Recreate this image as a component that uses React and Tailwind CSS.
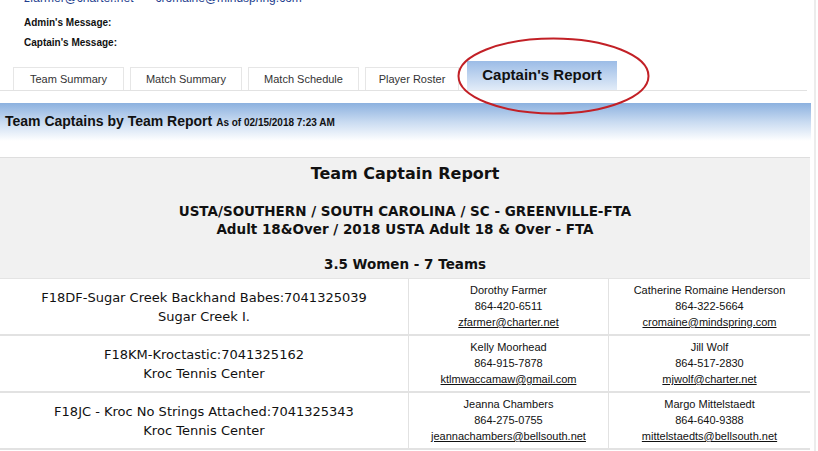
import React from "react";

const tabs = [
  { label: "Team Summary", width: "w-[111px]" },
  { label: "Match Summary", width: "w-[112px]" },
  { label: "Match Schedule", width: "w-[111px]" },
  { label: "Player Roster", width: "w-[94px]" },
];

const teams = [
  {
    name: "F18DF-Sugar Creek Backhand Babes:7041325039",
    site: "Sugar Creek I.",
    captains: [
      { name: "Dorothy Farmer", phone: "864-420-6511", email: "zfarmer@charter.net" },
      { name: "Catherine Romaine Henderson", phone: "864-322-5664", email: "cromaine@mindspring.com" },
    ],
  },
  {
    name: "F18KM-Kroctastic:7041325162",
    site: "Kroc Tennis Center",
    captains: [
      { name: "Kelly Moorhead", phone: "864-915-7878", email: "ktlmwaccamaw@gmail.com" },
      { name: "Jill Wolf", phone: "864-517-2830", email: "mjwolf@charter.net" },
    ],
  },
  {
    name: "F18JC - Kroc No Strings Attached:7041325343",
    site: "Kroc Tennis Center",
    captains: [
      { name: "Jeanna Chambers", phone: "864-275-0755", email: "jeannachambers@bellsouth.net" },
      { name: "Margo Mittelstaedt", phone: "864-640-9388", email: "mittelstaedts@bellsouth.net" },
    ],
  },
];

const Captain = ({ captain }) => (
  <div className="flex-1 flex flex-col items-center pt-[3px] text-[11px] leading-[16px] text-[#111]">
    <span>{captain.name}</span>
    <span>{captain.phone}</span>
    <a className="underline">{captain.email}</a>
  </div>
);

export default function App() {
  return (
    <div className="relative w-[818px] h-[451px] overflow-hidden bg-white font-['Liberation_Sans',Arial,sans-serif] text-black">
      <div className="flex">
        <div className="w-[811px]">
          {/* Contact line cut off at the top */}
          <div className="flex gap-[22px] pl-[24px] -mt-[9px] h-[14px] text-[12px] leading-[14px] text-[#1f3f8f]">
            <span>zfarmer@charter.net</span>
            <span>cromaine@mindspring.com</span>
          </div>

          {/* Messages */}
          <div className="pl-[24px] pt-[8px] text-[10px] font-bold leading-[20px] text-[#111]">
            <div>Admin's Message:</div>
            <div>Captain's Message:</div>
          </div>

          {/* Tabs */}
          <div className="mt-[8px] w-[807px] h-[30px] flex items-end gap-[6px] pl-[13px] border-b border-[#e2e2e2]">
            {tabs.map((tab) => (
              <div
                key={tab.label}
                className={`${tab.width} h-[23px] flex items-center justify-center border-t border-l border-r border-[#e6e6e6] text-[11px] text-[#333]`}
              >
                {tab.label}
              </div>
            ))}
            <div className="ml-[2px] w-[150px] h-[29px] flex items-center justify-center bg-gradient-to-b from-[#9cbce6] to-[#e2ecf8] text-[15px] font-bold text-[#111]">
              Captain's Report
            </div>
          </div>

          {/* Report band */}
          <div className="mt-[12px] h-[38px] bg-gradient-to-b from-[#8cb1df] via-[#c9dbf1] to-white flex items-center pl-[5px] pb-[2px]">
            <span className="text-[14px] font-bold text-[#111]">Team Captains by Team Report</span>
            <span className="ml-[4px] mt-[2px] text-[10px] font-bold text-[#111]">As of 02/15/2018 7:23 AM</span>
          </div>

          {/* Report header */}
          <div className="mt-[16px] w-[810px] h-[121px] bg-[#f1f1f1] border-t border-[#dedede] flex flex-col items-center font-['DejaVu_Sans',Verdana,sans-serif] font-bold text-[#111]">
            <div className="mt-[5px] text-[16px] leading-[22px]">Team Captain Report</div>
            <div className="mt-[17px] text-[13.5px] leading-[18px]">USTA/SOUTHERN / SOUTH CAROLINA / SC - GREENVILLE-FTA</div>
            <div className="text-[13.5px] leading-[18px]">Adult 18&amp;Over / 2018 USTA Adult 18 &amp; Over - FTA</div>
            <div className="mt-[17px] text-[13.5px] leading-[18px]">3.5 Women - 7 Teams</div>
          </div>

          {/* Team rows */}
          <div className="w-[810px] border-t border-[#e4e4e4]">
            {teams.map((team) => (
              <div key={team.name} className="flex h-[57px] border-b-2 border-[#e2e2e2]">
                <div className="w-[409px] flex flex-col items-center pt-[9px] border-r border-[#e2e2e2] font-['DejaVu_Sans',Verdana,sans-serif] text-[13px] leading-[19px] text-[#111]">
                  <span>{team.name}</span>
                  <span>{team.site}</span>
                </div>
                <div className="w-[200px] flex border-r border-[#e2e2e2]">
                  <Captain captain={team.captains[0]} />
                </div>
                <div className="flex-1 flex">
                  <Captain captain={team.captains[1]} />
                </div>
              </div>
            ))}
          </div>
        </div>
        <div className="ml-[3px] w-[2px] h-[451px] bg-[#ececec]" />
      </div>

      {/* Red highlight ellipse around the active tab */}
      <svg className="absolute left-[456px] top-[36px]" width="195" height="80" viewBox="0 0 195 80">
        <ellipse cx="97.5" cy="40" rx="95" ry="37.5" fill="none" stroke="#c22026" strokeWidth="2" />
      </svg>
    </div>
  );
}
